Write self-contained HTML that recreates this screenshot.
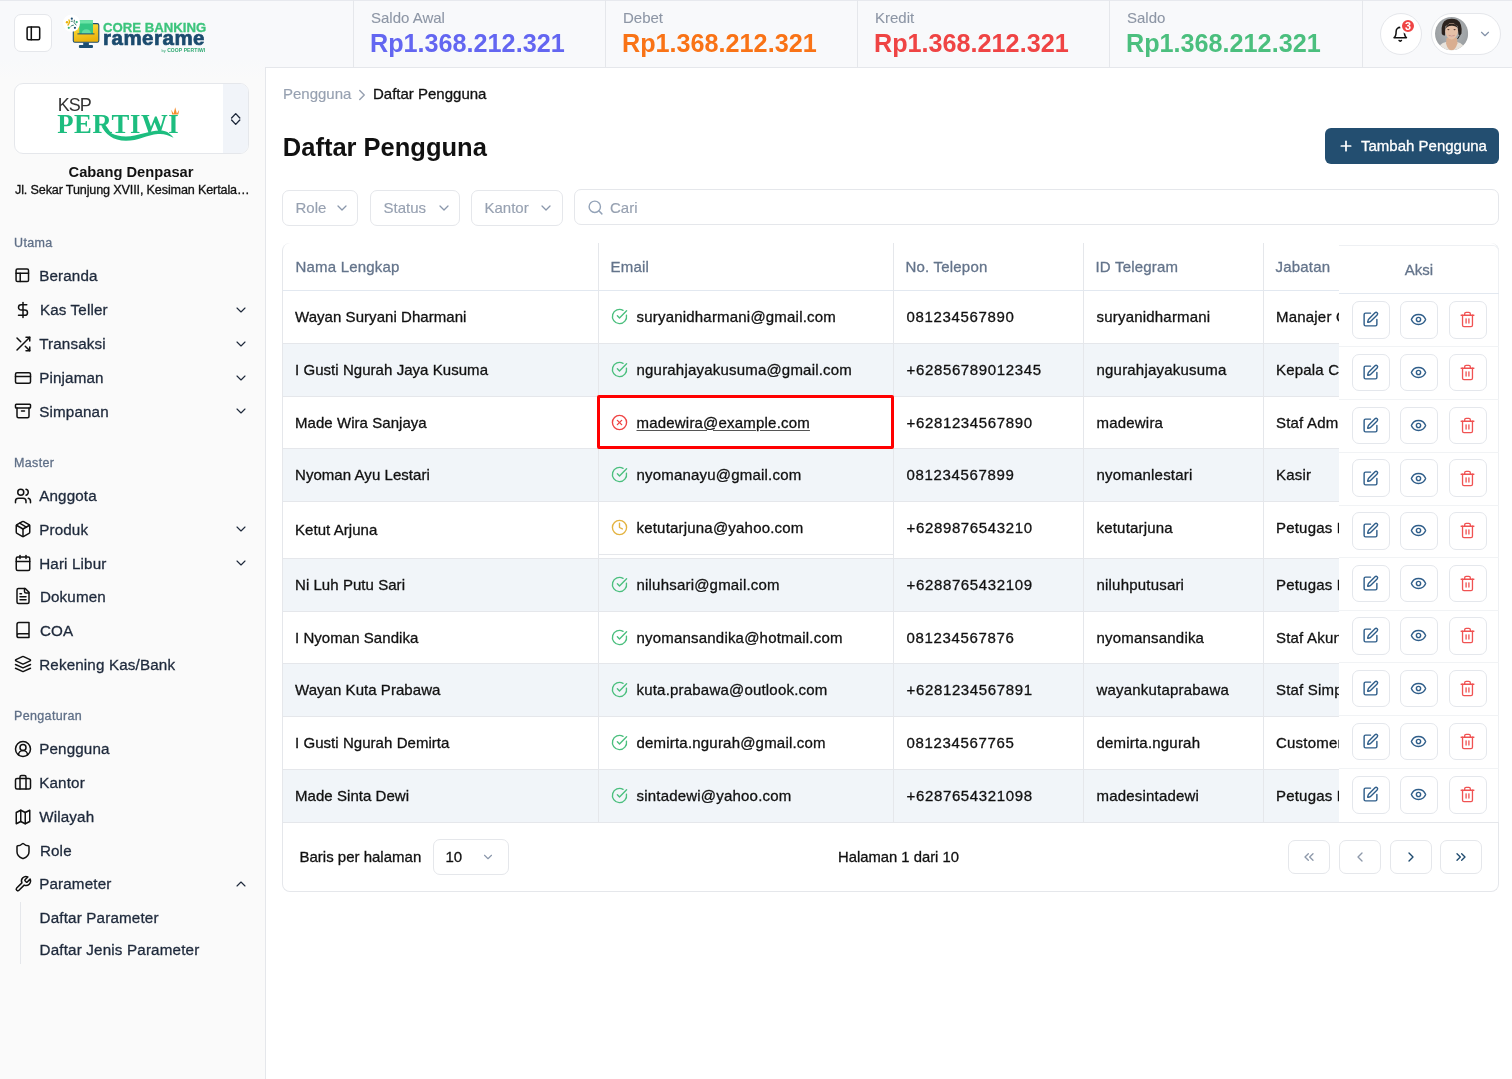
<!DOCTYPE html>
<html><head><meta charset="utf-8"><title>Daftar Pengguna</title>
<style>
html,body{margin:0;padding:0}
body{will-change:transform;width:1512px;height:1079px;position:relative;overflow:hidden;background:#fafafa;font-family:"Liberation Sans", sans-serif;-webkit-font-smoothing:antialiased}
.t{position:absolute;white-space:nowrap}
.b{position:absolute}
.ic{position:absolute;overflow:visible}
</style></head><body>
<div class="b" style="left:0px;top:0px;width:1512px;height:67px;background:#f8f9fb"></div>
<div class="b" style="left:0px;top:60px;width:265px;height:20px;background:linear-gradient(#f8f9fb,#fafafa)"></div>
<div class="b" style="left:0px;top:0px;width:1512px;height:1px;background:#e7e9ee"></div>
<div class="b" style="left:14px;top:14px;width:38px;height:38px;background:#fff;border:1px solid #e5e7eb;border-radius:7px;box-sizing:border-box"></div>
<svg class="ic" style="left:25px;top:24.7px;width:16.8px;height:16.8px" viewBox="0 0 24 24" fill="none" stroke="#111" stroke-width="2.2" stroke-linecap="round" stroke-linejoin="round"><rect width="18" height="18" x="3" y="3" rx="2"/><path d="M9 3v18"/></svg>
<svg class="ic" style="left:0;top:0;width:220px;height:60px" viewBox="0 0 220 60">
<defs><linearGradient id="yl" x1="0" y1="0" x2="0.3" y2="1"><stop offset="0" stop-color="#fde542"/><stop offset="1" stop-color="#ebb20c"/></linearGradient></defs>
<rect x="73.3" y="23.6" width="25.5" height="18.7" rx="1.6" fill="url(#yl)" stroke="#1d4e72" stroke-width="1.1"/>
<rect x="79.3" y="20.2" width="13.7" height="13.7" fill="#34c784"/>
<rect x="79.3" y="20.2" width="13.7" height="3.3" fill="#6be3a6"/>
<path d="M81.6 33.9 A4.7 4.7 0 0 1 91 33.9 Z" fill="#62dca2"/>
<path d="M77.8 33.9 H94.1" stroke="#1d4e72" stroke-width="1" stroke-linecap="round"/>
<rect x="83.2" y="42.5" width="5.7" height="3" fill="#1d4e72"/>
<rect x="78.9" y="45" width="14.1" height="3" rx="1" fill="#1d4e72"/>
<circle cx="71.5" cy="23.1" r="8.6" fill="#fff"/>
<circle cx="71.8" cy="18.7" r="1.1" fill="#1d4e72"/>
<circle cx="76.7" cy="22.1" r="1.1" fill="#34b27a"/>
<circle cx="67" cy="22.3" r="1.2" fill="#eab308"/>
<circle cx="74.9" cy="27.8" r="1.1" fill="#1d4e72"/>
<circle cx="68.8" cy="27.8" r="1.1" fill="#34b27a"/>
<path d="M68.7 19.5 Q70.6 22.5 67.6 25.5" stroke="#eab308" stroke-width="1.3" fill="none"/>
<path d="M70.7 21.3 L72.8 21.2 M74.4 19.8 Q72.8 22.6 76.3 25.3 M70.5 26.8 Q71.6 25 73.8 25.2" stroke="#1f6e5c" stroke-width="0.9" fill="none"/>
</svg>
<div class="t" style="left:103px;top:21.00px;font-size:13.2px;line-height:14px;color:#3cc47c;font-weight:bold;letter-spacing:0px;-webkit-text-stroke:0.3px currentColor">CORE BANKING</div>
<div class="t" style="left:103px;top:26.00px;font-size:20.5px;line-height:24px;color:#1b4b6e;font-weight:bold;letter-spacing:0.5px;-webkit-text-stroke:0.7px currentColor">ramerame</div>
<div class="t" style="left:161.5px;top:47.30px;font-size:5px;line-height:6px;color:#2fa872;font-weight:bold;letter-spacing:0.1px"><span style="font-weight:normal;font-size:4px">by </span>COOP PERTIWI</div>
<div class="b" style="left:353px;top:0px;width:1px;height:67px;background:#e5e7eb"></div>
<div class="t" style="left:371px;top:7.50px;font-size:15px;line-height:20px;color:#8d96a5;font-weight:normal;-webkit-text-stroke:0.1px currentColor">Saldo Awal</div>
<div class="t" style="left:370px;top:28.00px;font-size:25.2px;line-height:30px;color:#6366f1;font-weight:bold;">Rp1.368.212.321</div>
<div class="b" style="left:605px;top:0px;width:1px;height:67px;background:#e5e7eb"></div>
<div class="t" style="left:623px;top:7.50px;font-size:15px;line-height:20px;color:#8d96a5;font-weight:normal;-webkit-text-stroke:0.1px currentColor">Debet</div>
<div class="t" style="left:622px;top:28.00px;font-size:25.2px;line-height:30px;color:#f97316;font-weight:bold;">Rp1.368.212.321</div>
<div class="b" style="left:857px;top:0px;width:1px;height:67px;background:#e5e7eb"></div>
<div class="t" style="left:875px;top:7.50px;font-size:15px;line-height:20px;color:#8d96a5;font-weight:normal;-webkit-text-stroke:0.1px currentColor">Kredit</div>
<div class="t" style="left:874px;top:28.00px;font-size:25.2px;line-height:30px;color:#ef4444;font-weight:bold;">Rp1.368.212.321</div>
<div class="b" style="left:1109px;top:0px;width:1px;height:67px;background:#e5e7eb"></div>
<div class="t" style="left:1127px;top:7.50px;font-size:15px;line-height:20px;color:#8d96a5;font-weight:normal;-webkit-text-stroke:0.1px currentColor">Saldo</div>
<div class="t" style="left:1126px;top:28.00px;font-size:25.2px;line-height:30px;color:#4bbf7e;font-weight:bold;">Rp1.368.212.321</div>
<div class="b" style="left:1362px;top:0px;width:1px;height:67px;background:#e5e7eb"></div>
<div class="b" style="left:1380px;top:13px;width:42px;height:42px;background:#fff;border:1px solid #e5e7eb;border-radius:50%;box-sizing:border-box"></div>
<svg class="ic" style="left:1392px;top:25.7px;width:16.5px;height:16.5px" viewBox="0 0 24 24" fill="none" stroke="#111" stroke-width="2.25" stroke-linecap="round" stroke-linejoin="round"><path d="M6 8a6 6 0 0 1 12 0c0 7 3 9 3 9H3s3-2 3-9"/><path d="M10.3 21a1.94 1.94 0 0 0 3.4 0"/></svg>
<div class="b" style="left:1399.8px;top:17.6px;width:16.4px;height:16.4px;background:#ef4444;border-radius:50%;border:2px solid #fff;box-sizing:border-box"></div>
<div class="t" style="left:1405px;top:19.60px;font-size:10.8px;line-height:12px;color:#fff;font-weight:bold;">3</div>
<div class="b" style="left:1431px;top:13px;width:70px;height:42px;background:#fff;border:1px solid #e5e7eb;border-radius:21px;box-sizing:border-box"></div>
<svg class="ic" style="left:1434.6px;top:17.1px;width:33.2px;height:33.2px" viewBox="0 0 33.2 33.2">
<defs><clipPath id="avc"><circle cx="16.6" cy="16.6" r="16.6"/></clipPath>
<radialGradient id="avbg" cx="0.5" cy="0.45" r="0.6"><stop offset="0" stop-color="#b2b6b8"/><stop offset="1" stop-color="#989c9f"/></radialGradient></defs>
<g clip-path="url(#avc)"><rect width="33.2" height="33.2" fill="url(#avbg)"/>
<path d="M2 34 Q4 26.5 11 25 L22 25 Q29 26.5 31 34Z" fill="#e7e3dc"/>
<path d="M11.5 21 L22 21 L22.5 26.5 Q20 33.5 16.6 33.5 Q13 33.5 11 26.5Z" fill="#d9ae90"/>
<path d="M6.7 16.5 Q5.5 5 12 2.6 Q17 0.6 22 2.8 Q27.5 6 26.5 16.5 Q25 19 23.5 17.5 L22.5 9 Q17 6 10.5 9 L10 18.5 Q7.5 19 6.7 16.5Z" fill="#2b221d"/>
<ellipse cx="16.6" cy="14.3" rx="6.3" ry="8.2" fill="#e5c0a7"/>
<path d="M10.3 12 Q12 6.5 17 6.6 Q21.5 6.8 23 11.5 Q21 8.6 16.6 8.8 Q12 9 10.3 12Z" fill="#2b221d"/>
<ellipse cx="13.4" cy="12.6" rx="1.1" ry="0.6" fill="#5a4036"/><ellipse cx="19.6" cy="12.6" rx="1.1" ry="0.6" fill="#5a4036"/>
<path d="M13.8 18.4 Q16.6 20.6 19.6 18.4 Q16.6 19.3 13.8 18.4Z" fill="#fff" stroke="#b5706a" stroke-width="0.4"/>
<path d="M25.4 14 Q25.5 19 22.5 22" stroke="#222" stroke-width="1" fill="none"/>
</g></svg>
<svg class="ic" style="left:1478px;top:26.5px;width:14px;height:14px" viewBox="0 0 24 24" fill="none" stroke="#8391a7" stroke-width="2" stroke-linecap="round" stroke-linejoin="round"><path d="m6 9 6 6 6-6"/></svg>
<div class="b" style="left:265px;top:67px;width:1247px;height:1012px;background:#fff;border-left:1px solid #e5e7eb;border-top:1px solid #e5e7eb;box-sizing:border-box"></div>
<div class="b" style="left:14px;top:83px;width:235px;height:71px;background:#fff;border:1px solid #e5e7eb;border-radius:9px;box-sizing:border-box;overflow:hidden"></div>
<div class="b" style="left:223px;top:84px;width:25px;height:69px;background:#f1f4f9;border-radius:0 8px 8px 0"></div>
<svg class="ic" style="left:228px;top:111px;width:16px;height:16px" viewBox="0 0 16 16" fill="none" stroke="#1e293b" stroke-width="1.35" stroke-linecap="round" stroke-linejoin="round"><path d="M3.6 7 L7.7 2.6 L11.8 7"/><path d="M3.6 9 L7.7 13.4 L11.8 9"/></svg>
<div class="t" style="left:57.8px;top:94.80px;font-size:18px;line-height:20px;color:#333;font-weight:normal;-webkit-text-stroke:0px;letter-spacing:-1px">KSP</div>
<div class="t" style="left:57.2px;top:110.30px;font-size:26.7px;line-height:28px;color:#1dbd7f;font-weight:bold;font-family:'Liberation Serif',serif;letter-spacing:0.62px">PERTIWI</div>
<svg class="ic" style="left:0;top:0;width:265px;height:200px" viewBox="0 0 265 200"><path d="M101 125 C106 131 114 136.5 126 136.5 C138 136.5 148 130.5 160 130.5 C166 130.5 170 133 173.5 137.8 C168 134.5 163 133.5 158 134 C147 135 138 140.8 126 140.8 C113 140.8 105 134 101 125 Z" fill="#1dbd7f"/><path d="M171.3 109.8 L173.6 113.8 L175.2 107.2 L176.9 113.8 L179.2 109.8 L178.3 114.6 L172.2 114.6 Z" fill="#f58b2a"/></svg>
<div class="t" style="left:131px;top:161.80px;font-size:14.7px;line-height:20px;color:#111;font-weight:bold;transform:translateX(-50%);white-space:nowrap">Cabang Denpasar</div>
<div class="t" style="left:15px;top:181.50px;font-size:12.6px;line-height:16px;color:#111;font-weight:normal;-webkit-text-stroke:0.3px currentColor;white-space:nowrap;letter-spacing:-0.14px">Jl. Sekar Tunjung XVIII, Kesiman Kertala&#8230;</div>
<div class="t" style="left:14px;top:235.30px;font-size:12.5px;line-height:16px;color:#5f6f87;font-weight:normal;-webkit-text-stroke:0.3px currentColor;letter-spacing:0.35px">Utama</div>
<svg class="ic" style="left:14.2px;top:267.4px;width:16.6px;height:16.6px" viewBox="0 0 24 24" fill="none" stroke="#111" stroke-width="2.15" stroke-linecap="round" stroke-linejoin="round"><rect width="18" height="18" x="3" y="3" rx="2"/><path d="M3 9h18"/><path d="M9 21V9"/></svg>
<div class="t" style="left:39.2px;top:266.20px;font-size:15.2px;line-height:20px;color:#1e293b;font-weight:normal;-webkit-text-stroke:0.3px currentColor;white-space:nowrap;letter-spacing:0.15px">Beranda</div>
<svg class="ic" style="left:13.6px;top:300.7px;width:18px;height:18px" viewBox="0 0 24 24" fill="none" stroke="#111" stroke-width="2" stroke-linecap="round" stroke-linejoin="round"><line x1="12" x2="12" y1="2" y2="22"/><path d="M17 5H9.5a3.5 3.5 0 0 0 0 7h5a3.5 3.5 0 0 1 0 7H6"/></svg>
<div class="t" style="left:39.900000000000006px;top:300.20px;font-size:15.2px;line-height:20px;color:#1e293b;font-weight:normal;-webkit-text-stroke:0.3px currentColor;white-space:nowrap;letter-spacing:0.15px">Kas Teller</div>
<svg class="ic" style="left:232.5px;top:301.7px;width:16px;height:16px" viewBox="0 0 24 24" fill="none" stroke="#1e293b" stroke-width="1.7" stroke-linecap="round" stroke-linejoin="round"><path d="m6 9 6 6 6-6"/></svg>
<svg class="ic" style="left:13.6px;top:334.6px;width:18px;height:18px" viewBox="0 0 24 24" fill="none" stroke="#111" stroke-width="2" stroke-linecap="round" stroke-linejoin="round"><polyline points="16 3 21 3 21 8"/><line x1="4" x2="21" y1="20" y2="3"/><polyline points="21 16 21 21 16 21"/><line x1="15" x2="21" y1="15" y2="21"/><line x1="4" x2="9" y1="4" y2="9"/></svg>
<div class="t" style="left:39.2px;top:334.10px;font-size:15.2px;line-height:20px;color:#1e293b;font-weight:normal;-webkit-text-stroke:0.3px currentColor;white-space:nowrap;letter-spacing:0.15px">Transaksi</div>
<svg class="ic" style="left:232.5px;top:335.6px;width:16px;height:16px" viewBox="0 0 24 24" fill="none" stroke="#1e293b" stroke-width="1.7" stroke-linecap="round" stroke-linejoin="round"><path d="m6 9 6 6 6-6"/></svg>
<svg class="ic" style="left:13.6px;top:368.5px;width:18px;height:18px" viewBox="0 0 24 24" fill="none" stroke="#111" stroke-width="2" stroke-linecap="round" stroke-linejoin="round"><rect width="20" height="14" x="2" y="5" rx="2"/><line x1="2" x2="22" y1="10" y2="10"/></svg>
<div class="t" style="left:39.2px;top:368.00px;font-size:15.2px;line-height:20px;color:#1e293b;font-weight:normal;-webkit-text-stroke:0.3px currentColor;white-space:nowrap;letter-spacing:0.15px">Pinjaman</div>
<svg class="ic" style="left:232.5px;top:369.5px;width:16px;height:16px" viewBox="0 0 24 24" fill="none" stroke="#1e293b" stroke-width="1.7" stroke-linecap="round" stroke-linejoin="round"><path d="m6 9 6 6 6-6"/></svg>
<svg class="ic" style="left:13.6px;top:402.3px;width:18px;height:18px" viewBox="0 0 24 24" fill="none" stroke="#111" stroke-width="2" stroke-linecap="round" stroke-linejoin="round"><rect width="20" height="5" x="2" y="3" rx="1"/><path d="M4 8v11a2 2 0 0 0 2 2h12a2 2 0 0 0 2-2V8"/><path d="M10 12h4"/></svg>
<div class="t" style="left:39.2px;top:401.80px;font-size:15.2px;line-height:20px;color:#1e293b;font-weight:normal;-webkit-text-stroke:0.3px currentColor;white-space:nowrap;letter-spacing:0.15px">Simpanan</div>
<svg class="ic" style="left:232.5px;top:403.3px;width:16px;height:16px" viewBox="0 0 24 24" fill="none" stroke="#1e293b" stroke-width="1.7" stroke-linecap="round" stroke-linejoin="round"><path d="m6 9 6 6 6-6"/></svg>
<div class="t" style="left:14px;top:455.00px;font-size:12.5px;line-height:16px;color:#5f6f87;font-weight:normal;-webkit-text-stroke:0.3px currentColor;letter-spacing:0.35px">Master</div>
<svg class="ic" style="left:13.6px;top:486.5px;width:18px;height:18px" viewBox="0 0 24 24" fill="none" stroke="#111" stroke-width="2" stroke-linecap="round" stroke-linejoin="round"><path d="M16 21v-2a4 4 0 0 0-4-4H6a4 4 0 0 0-4 4v2"/><circle cx="9" cy="7" r="4"/><path d="M22 21v-2a4 4 0 0 0-3-3.87"/><path d="M16 3.13a4 4 0 0 1 0 7.75"/></svg>
<div class="t" style="left:39.2px;top:486.00px;font-size:15.2px;line-height:20px;color:#1e293b;font-weight:normal;-webkit-text-stroke:0.3px currentColor;white-space:nowrap;letter-spacing:0.15px">Anggota</div>
<svg class="ic" style="left:13.6px;top:520.4px;width:18px;height:18px" viewBox="0 0 24 24" fill="none" stroke="#111" stroke-width="2" stroke-linecap="round" stroke-linejoin="round"><path d="m7.5 4.27 9 5.15"/><path d="M21 8a2 2 0 0 0-1-1.73l-7-4a2 2 0 0 0-2 0l-7 4A2 2 0 0 0 3 8v8a2 2 0 0 0 1 1.73l7 4a2 2 0 0 0 2 0l7-4A2 2 0 0 0 21 16Z"/><path d="m3.3 7 8.7 5 8.7-5"/><path d="M12 22V12"/></svg>
<div class="t" style="left:39.2px;top:519.90px;font-size:15.2px;line-height:20px;color:#1e293b;font-weight:normal;-webkit-text-stroke:0.3px currentColor;white-space:nowrap;letter-spacing:0.15px">Produk</div>
<svg class="ic" style="left:232.5px;top:521.4px;width:16px;height:16px" viewBox="0 0 24 24" fill="none" stroke="#1e293b" stroke-width="1.7" stroke-linecap="round" stroke-linejoin="round"><path d="m6 9 6 6 6-6"/></svg>
<svg class="ic" style="left:13.6px;top:554.3px;width:18px;height:18px" viewBox="0 0 24 24" fill="none" stroke="#111" stroke-width="2" stroke-linecap="round" stroke-linejoin="round"><path d="M8 2v4"/><path d="M16 2v4"/><rect width="18" height="18" x="3" y="4" rx="2"/><path d="M3 10h18"/></svg>
<div class="t" style="left:39.2px;top:553.80px;font-size:15.2px;line-height:20px;color:#1e293b;font-weight:normal;-webkit-text-stroke:0.3px currentColor;white-space:nowrap;letter-spacing:0.15px">Hari Libur</div>
<svg class="ic" style="left:232.5px;top:555.3px;width:16px;height:16px" viewBox="0 0 24 24" fill="none" stroke="#1e293b" stroke-width="1.7" stroke-linecap="round" stroke-linejoin="round"><path d="m6 9 6 6 6-6"/></svg>
<svg class="ic" style="left:13.6px;top:587.2px;width:18px;height:18px" viewBox="0 0 24 24" fill="none" stroke="#111" stroke-width="2" stroke-linecap="round" stroke-linejoin="round"><path d="M15 2H6a2 2 0 0 0-2 2v16a2 2 0 0 0 2 2h12a2 2 0 0 0 2-2V7Z"/><path d="M14 2v4a2 2 0 0 0 2 2h4"/><path d="M10 9H8"/><path d="M16 13H8"/><path d="M16 17H8"/></svg>
<div class="t" style="left:39.900000000000006px;top:586.70px;font-size:15.2px;line-height:20px;color:#1e293b;font-weight:normal;-webkit-text-stroke:0.3px currentColor;white-space:nowrap;letter-spacing:0.15px">Dokumen</div>
<svg class="ic" style="left:13.6px;top:621.2px;width:18px;height:18px" viewBox="0 0 24 24" fill="none" stroke="#111" stroke-width="2" stroke-linecap="round" stroke-linejoin="round"><path d="M4 19.5v-15A2.5 2.5 0 0 1 6.5 2H20v20H6.5a2.5 2.5 0 0 1 0-5H20"/></svg>
<div class="t" style="left:39.900000000000006px;top:620.70px;font-size:15.2px;line-height:20px;color:#1e293b;font-weight:normal;-webkit-text-stroke:0.3px currentColor;white-space:nowrap;letter-spacing:0.15px">COA</div>
<svg class="ic" style="left:13.6px;top:655.3px;width:18px;height:18px" viewBox="0 0 24 24" fill="none" stroke="#111" stroke-width="2" stroke-linecap="round" stroke-linejoin="round"><path d="M12.83 2.18a2 2 0 0 0-1.66 0L2.6 6.08a1 1 0 0 0 0 1.83l8.58 3.91a2 2 0 0 0 1.66 0l8.58-3.9a1 1 0 0 0 0-1.83Z"/><path d="m22 17.65-9.17 4.16a2 2 0 0 1-1.66 0L2 17.65"/><path d="m22 12.65-9.17 4.16a2 2 0 0 1-1.66 0L2 12.65"/></svg>
<div class="t" style="left:39.2px;top:654.80px;font-size:15.2px;line-height:20px;color:#1e293b;font-weight:normal;-webkit-text-stroke:0.3px currentColor;white-space:nowrap;letter-spacing:0.15px">Rekening Kas/Bank</div>
<div class="t" style="left:14px;top:708.30px;font-size:12.5px;line-height:16px;color:#5f6f87;font-weight:normal;-webkit-text-stroke:0.3px currentColor;letter-spacing:0.35px">Pengaturan</div>
<svg class="ic" style="left:13.6px;top:739.8px;width:18px;height:18px" viewBox="0 0 24 24" fill="none" stroke="#111" stroke-width="2" stroke-linecap="round" stroke-linejoin="round"><path d="M18 20a6 6 0 0 0-12 0"/><circle cx="12" cy="10" r="4"/><circle cx="12" cy="12" r="10"/></svg>
<div class="t" style="left:39.2px;top:739.30px;font-size:15.2px;line-height:20px;color:#1e293b;font-weight:normal;-webkit-text-stroke:0.3px currentColor;white-space:nowrap;letter-spacing:0.15px">Pengguna</div>
<svg class="ic" style="left:13.6px;top:773.7px;width:18px;height:18px" viewBox="0 0 24 24" fill="none" stroke="#111" stroke-width="2" stroke-linecap="round" stroke-linejoin="round"><path d="M16 20V4a2 2 0 0 0-2-2h-4a2 2 0 0 0-2 2v16"/><rect width="20" height="14" x="2" y="6" rx="2"/></svg>
<div class="t" style="left:39.2px;top:773.20px;font-size:15.2px;line-height:20px;color:#1e293b;font-weight:normal;-webkit-text-stroke:0.3px currentColor;white-space:nowrap;letter-spacing:0.15px">Kantor</div>
<svg class="ic" style="left:13.6px;top:807.6px;width:18px;height:18px" viewBox="0 0 24 24" fill="none" stroke="#111" stroke-width="2" stroke-linecap="round" stroke-linejoin="round"><polygon points="3 6 9 3 15 6 21 3 21 18 15 21 9 18 3 21"/><line x1="9" x2="9" y1="3" y2="18"/><line x1="15" x2="15" y1="6" y2="21"/></svg>
<div class="t" style="left:39.2px;top:807.10px;font-size:15.2px;line-height:20px;color:#1e293b;font-weight:normal;-webkit-text-stroke:0.3px currentColor;white-space:nowrap;letter-spacing:0.15px">Wilayah</div>
<svg class="ic" style="left:13.6px;top:841.5px;width:18px;height:18px" viewBox="0 0 24 24" fill="none" stroke="#111" stroke-width="2" stroke-linecap="round" stroke-linejoin="round"><path d="M20 13c0 5-3.5 7.5-7.66 8.95a1 1 0 0 1-.67-.01C7.5 20.5 4 18 4 13V6a1 1 0 0 1 1-1c2 0 4.5-1.2 6.24-2.72a1.17 1.17 0 0 1 1.52 0C14.51 3.81 17 5 19 5a1 1 0 0 1 1 1z"/></svg>
<div class="t" style="left:39.900000000000006px;top:841.00px;font-size:15.2px;line-height:20px;color:#1e293b;font-weight:normal;-webkit-text-stroke:0.3px currentColor;white-space:nowrap;letter-spacing:0.15px">Role</div>
<svg class="ic" style="left:13.6px;top:874.6px;width:18px;height:18px" viewBox="0 0 24 24" fill="none" stroke="#111" stroke-width="2" stroke-linecap="round" stroke-linejoin="round"><path d="M14.7 6.3a1 1 0 0 0 0 1.4l1.6 1.6a1 1 0 0 0 1.4 0l3.77-3.77a6 6 0 0 1-7.94 7.94l-6.91 6.91a2.12 2.12 0 0 1-3-3l6.91-6.91a6 6 0 0 1 7.94-7.94l-3.76 3.76z"/></svg>
<div class="t" style="left:39.2px;top:874.10px;font-size:15.2px;line-height:20px;color:#1e293b;font-weight:normal;-webkit-text-stroke:0.3px currentColor;white-space:nowrap;letter-spacing:0.15px">Parameter</div>
<svg class="ic" style="left:232.5px;top:875.6px;width:16px;height:16px" viewBox="0 0 24 24" fill="none" stroke="#1e293b" stroke-width="1.7" stroke-linecap="round" stroke-linejoin="round"><path d="m18 15-6-6-6 6"/></svg>
<div class="b" style="left:20px;top:902px;width:1px;height:62px;background:#e5e7eb"></div>
<div class="t" style="left:39.5px;top:907.50px;font-size:15.2px;line-height:20px;color:#1e293b;font-weight:normal;-webkit-text-stroke:0.3px currentColor;white-space:nowrap;letter-spacing:0.17px">Daftar Parameter</div>
<div class="t" style="left:39.5px;top:939.80px;font-size:15.2px;line-height:20px;color:#1e293b;font-weight:normal;-webkit-text-stroke:0.3px currentColor;white-space:nowrap;letter-spacing:0.17px">Daftar Jenis Parameter</div>
<div class="t" style="left:283px;top:83.80px;font-size:15px;line-height:20px;color:#97a1b1;font-weight:normal;-webkit-text-stroke:0.15px currentColor">Pengguna</div>
<svg class="ic" style="left:352.9px;top:85.5px;width:18px;height:18px" viewBox="0 0 24 24" fill="none" stroke="#97a1b1" stroke-width="1.9" stroke-linecap="round" stroke-linejoin="round"><path d="m9 18 6-6-6-6"/></svg>
<div class="t" style="left:373px;top:84.00px;font-size:15px;line-height:20px;color:#111;font-weight:normal;-webkit-text-stroke:0.3px currentColor;">Daftar Pengguna</div>
<div class="t" style="left:282.8px;top:132.20px;font-size:25.5px;line-height:30px;color:#111;font-weight:bold;letter-spacing:0px">Daftar Pengguna</div>
<div class="b" style="left:1325px;top:128px;width:174px;height:36px;background:#234e70;border-radius:6px"></div>
<svg class="ic" style="left:1338px;top:138px;width:16px;height:16px" viewBox="0 0 24 24" fill="none" stroke="#fff" stroke-width="2.6" stroke-linecap="round" stroke-linejoin="round"><path d="M5 12h14"/><path d="M12 5v14"/></svg>
<div class="t" style="left:1361px;top:136.30px;font-size:15px;line-height:20px;color:#fff;font-weight:normal;-webkit-text-stroke:0.3px currentColor;white-space:nowrap">Tambah Pengguna</div>
<div class="b" style="left:282px;top:190px;width:76px;height:36px;border:1px solid #e5e7eb;border-radius:7px;box-sizing:border-box;background:#fff"></div>
<div class="t" style="left:295.5px;top:198.00px;font-size:15px;line-height:20px;color:#97a1b1;font-weight:normal;-webkit-text-stroke:0.15px currentColor">Role</div>
<svg class="ic" style="left:334px;top:200px;width:16px;height:16px" viewBox="0 0 24 24" fill="none" stroke="#8a97ab" stroke-width="1.9" stroke-linecap="round" stroke-linejoin="round"><path d="m6 9 6 6 6-6"/></svg>
<div class="b" style="left:370px;top:190px;width:90px;height:36px;border:1px solid #e5e7eb;border-radius:7px;box-sizing:border-box;background:#fff"></div>
<div class="t" style="left:383.5px;top:198.00px;font-size:15px;line-height:20px;color:#97a1b1;font-weight:normal;-webkit-text-stroke:0.15px currentColor">Status</div>
<svg class="ic" style="left:436px;top:200px;width:16px;height:16px" viewBox="0 0 24 24" fill="none" stroke="#8a97ab" stroke-width="1.9" stroke-linecap="round" stroke-linejoin="round"><path d="m6 9 6 6 6-6"/></svg>
<div class="b" style="left:471px;top:190px;width:92px;height:36px;border:1px solid #e5e7eb;border-radius:7px;box-sizing:border-box;background:#fff"></div>
<div class="t" style="left:484.5px;top:198.00px;font-size:15px;line-height:20px;color:#97a1b1;font-weight:normal;-webkit-text-stroke:0.15px currentColor">Kantor</div>
<svg class="ic" style="left:537.8px;top:200px;width:16px;height:16px" viewBox="0 0 24 24" fill="none" stroke="#8a97ab" stroke-width="1.9" stroke-linecap="round" stroke-linejoin="round"><path d="m6 9 6 6 6-6"/></svg>
<div class="b" style="left:574px;top:189px;width:925px;height:36px;border:1px solid #e5e7eb;border-radius:7px;box-sizing:border-box;background:#fff"></div>
<svg class="ic" style="left:586.5px;top:198.5px;width:17px;height:17px" viewBox="0 0 24 24" fill="none" stroke="#94a3b8" stroke-width="2" stroke-linecap="round" stroke-linejoin="round"><circle cx="11" cy="11" r="8"/><path d="m21 21-4.3-4.3"/></svg>
<div class="t" style="left:610px;top:197.50px;font-size:15px;line-height:20px;color:#97a1b1;font-weight:normal;-webkit-text-stroke:0.15px currentColor">Cari</div>
<div class="b" style="left:282px;top:243px;width:1217px;height:649px;border:1px solid #e5e7eb;border-top:none;border-radius:8px;box-sizing:border-box;background:#fff"></div>
<div class="t" style="left:295.5px;top:256.50px;font-size:15px;line-height:20px;color:#64748b;font-weight:normal;-webkit-text-stroke:0.3px currentColor;white-space:nowrap;letter-spacing:0.2px">Nama Lengkap</div>
<div class="t" style="left:610.5px;top:256.50px;font-size:15px;line-height:20px;color:#64748b;font-weight:normal;-webkit-text-stroke:0.3px currentColor;white-space:nowrap;letter-spacing:0.2px">Email</div>
<div class="t" style="left:905.5px;top:256.50px;font-size:15px;line-height:20px;color:#64748b;font-weight:normal;-webkit-text-stroke:0.3px currentColor;white-space:nowrap;letter-spacing:0.2px">No. Telepon</div>
<div class="t" style="left:1095.5px;top:256.50px;font-size:15px;line-height:20px;color:#64748b;font-weight:normal;-webkit-text-stroke:0.3px currentColor;white-space:nowrap;letter-spacing:0.2px">ID Telegram</div>
<div class="t" style="left:1275.5px;top:256.50px;font-size:15px;line-height:20px;color:#64748b;font-weight:normal;-webkit-text-stroke:0.3px currentColor;white-space:nowrap;letter-spacing:0.2px">Jabatan</div>
<div class="b" style="left:283px;top:290px;width:1056px;height:1px;background:#e2e8f0"></div>
<div class="b" style="left:598px;top:243px;width:1px;height:579px;background:#e8ebf0"></div>
<div class="b" style="left:893px;top:243px;width:1px;height:579px;background:#e8ebf0"></div>
<div class="b" style="left:1083px;top:243px;width:1px;height:579px;background:#e8ebf0"></div>
<div class="b" style="left:1263px;top:243px;width:1px;height:579px;background:#e8ebf0"></div>
<div class="b" style="left:283px;top:343px;width:1056px;height:1px;background:#e5e7eb"></div>
<div class="t" style="left:295px;top:307.00px;font-size:15px;line-height:20px;color:#111;font-weight:normal;-webkit-text-stroke:0.3px currentColor;white-space:nowrap;letter-spacing:0.05px">Wayan Suryani Dharmani</div>
<svg class="ic" style="left:611px;top:308.4px;width:17px;height:17px" viewBox="0 0 24 24" fill="none" stroke="#4bbf7e" stroke-width="1.95" stroke-linecap="round" stroke-linejoin="round"><path d="M21.801 10A10 10 0 1 1 17 3.335"/><path d="m9 11 3 3L22 4"/></svg>
<div class="t" style="left:636.5px;top:307.00px;font-size:15px;line-height:20px;color:#111;font-weight:normal;-webkit-text-stroke:0.3px currentColor;white-space:nowrap;letter-spacing:0.2px">suryanidharmani@gmail.com</div>
<div class="t" style="left:906.5px;top:307.00px;font-size:15px;line-height:20px;color:#111;font-weight:normal;-webkit-text-stroke:0.3px currentColor;white-space:nowrap;letter-spacing:0.65px">081234567890</div>
<div class="t" style="left:1096.5px;top:307.00px;font-size:15px;line-height:20px;color:#111;font-weight:normal;-webkit-text-stroke:0.3px currentColor;white-space:nowrap;letter-spacing:0.2px">suryanidharmani</div>
<div class="t" style="left:1276px;top:307.00px;font-size:15px;line-height:20px;color:#111;font-weight:normal;-webkit-text-stroke:0.3px currentColor;white-space:nowrap;letter-spacing:0.2px">Manajer Operasional</div>
<div class="b" style="left:283px;top:344px;width:1056px;height:52px;background:#f1f5f9"></div>
<div class="b" style="left:283px;top:396px;width:1056px;height:1px;background:#e5e7eb"></div>
<div class="t" style="left:295px;top:360.00px;font-size:15px;line-height:20px;color:#111;font-weight:normal;-webkit-text-stroke:0.3px currentColor;white-space:nowrap;letter-spacing:0.05px">I Gusti Ngurah Jaya Kusuma</div>
<svg class="ic" style="left:611px;top:361.4px;width:17px;height:17px" viewBox="0 0 24 24" fill="none" stroke="#4bbf7e" stroke-width="1.95" stroke-linecap="round" stroke-linejoin="round"><path d="M21.801 10A10 10 0 1 1 17 3.335"/><path d="m9 11 3 3L22 4"/></svg>
<div class="t" style="left:636.5px;top:360.00px;font-size:15px;line-height:20px;color:#111;font-weight:normal;-webkit-text-stroke:0.3px currentColor;white-space:nowrap;letter-spacing:0.2px">ngurahjayakusuma@gmail.com</div>
<div class="t" style="left:906.5px;top:360.00px;font-size:15px;line-height:20px;color:#111;font-weight:normal;-webkit-text-stroke:0.3px currentColor;white-space:nowrap;letter-spacing:0.65px">+62856789012345</div>
<div class="t" style="left:1096.5px;top:360.00px;font-size:15px;line-height:20px;color:#111;font-weight:normal;-webkit-text-stroke:0.3px currentColor;white-space:nowrap;letter-spacing:0.2px">ngurahjayakusuma</div>
<div class="t" style="left:1276px;top:360.00px;font-size:15px;line-height:20px;color:#111;font-weight:normal;-webkit-text-stroke:0.3px currentColor;white-space:nowrap;letter-spacing:0.2px">Kepala Cabang</div>
<div class="b" style="left:283px;top:448px;width:1056px;height:1px;background:#e5e7eb"></div>
<div class="t" style="left:295px;top:412.50px;font-size:15px;line-height:20px;color:#111;font-weight:normal;-webkit-text-stroke:0.3px currentColor;white-space:nowrap;letter-spacing:0.05px">Made Wira Sanjaya</div>
<svg class="ic" style="left:611px;top:413.9px;width:17px;height:17px" viewBox="0 0 24 24" fill="none" stroke="#ef4444" stroke-width="1.95" stroke-linecap="round" stroke-linejoin="round"><circle cx="12" cy="12" r="10"/><path d="m15 9-6 6"/><path d="m9 9 6 6"/></svg>
<div class="t" style="left:636.5px;top:412.50px;font-size:15px;line-height:20px;color:#111;font-weight:normal;-webkit-text-stroke:0.3px currentColor;white-space:nowrap;letter-spacing:0.2px;text-decoration:underline;text-underline-offset:1.5px;text-decoration-color:#555">madewira@example.com</div>
<div class="t" style="left:906.5px;top:412.50px;font-size:15px;line-height:20px;color:#111;font-weight:normal;-webkit-text-stroke:0.3px currentColor;white-space:nowrap;letter-spacing:0.65px">+6281234567890</div>
<div class="t" style="left:1096.5px;top:412.50px;font-size:15px;line-height:20px;color:#111;font-weight:normal;-webkit-text-stroke:0.3px currentColor;white-space:nowrap;letter-spacing:0.2px">madewira</div>
<div class="t" style="left:1276px;top:412.50px;font-size:15px;line-height:20px;color:#111;font-weight:normal;-webkit-text-stroke:0.3px currentColor;white-space:nowrap;letter-spacing:0.2px">Staf Administrasi</div>
<div class="b" style="left:283px;top:449px;width:1056px;height:52px;background:#f1f5f9"></div>
<div class="b" style="left:283px;top:501px;width:1056px;height:1px;background:#e5e7eb"></div>
<div class="t" style="left:295px;top:465.00px;font-size:15px;line-height:20px;color:#111;font-weight:normal;-webkit-text-stroke:0.3px currentColor;white-space:nowrap;letter-spacing:0.05px">Nyoman Ayu Lestari</div>
<svg class="ic" style="left:611px;top:466.4px;width:17px;height:17px" viewBox="0 0 24 24" fill="none" stroke="#4bbf7e" stroke-width="1.95" stroke-linecap="round" stroke-linejoin="round"><path d="M21.801 10A10 10 0 1 1 17 3.335"/><path d="m9 11 3 3L22 4"/></svg>
<div class="t" style="left:636.5px;top:465.00px;font-size:15px;line-height:20px;color:#111;font-weight:normal;-webkit-text-stroke:0.3px currentColor;white-space:nowrap;letter-spacing:0.2px">nyomanayu@gmail.com</div>
<div class="t" style="left:906.5px;top:465.00px;font-size:15px;line-height:20px;color:#111;font-weight:normal;-webkit-text-stroke:0.3px currentColor;white-space:nowrap;letter-spacing:0.65px">081234567899</div>
<div class="t" style="left:1096.5px;top:465.00px;font-size:15px;line-height:20px;color:#111;font-weight:normal;-webkit-text-stroke:0.3px currentColor;white-space:nowrap;letter-spacing:0.2px">nyomanlestari</div>
<div class="t" style="left:1276px;top:465.00px;font-size:15px;line-height:20px;color:#111;font-weight:normal;-webkit-text-stroke:0.3px currentColor;white-space:nowrap;letter-spacing:0.2px">Kasir</div>
<div class="b" style="left:283px;top:558px;width:1056px;height:1px;background:#e5e7eb"></div>
<div class="t" style="left:295px;top:520.30px;font-size:15px;line-height:20px;color:#111;font-weight:normal;-webkit-text-stroke:0.3px currentColor;white-space:nowrap;letter-spacing:0.05px">Ketut Arjuna</div>
<svg class="ic" style="left:611px;top:519.1px;width:17px;height:17px" viewBox="0 0 24 24" fill="none" stroke="#e3b341" stroke-width="1.95" stroke-linecap="round" stroke-linejoin="round"><circle cx="12" cy="12" r="10"/><polyline points="12 6 12 12 16 14"/></svg>
<div class="t" style="left:636.5px;top:517.70px;font-size:15px;line-height:20px;color:#111;font-weight:normal;-webkit-text-stroke:0.3px currentColor;white-space:nowrap;letter-spacing:0.2px">ketutarjuna@yahoo.com</div>
<div class="t" style="left:906.5px;top:517.70px;font-size:15px;line-height:20px;color:#111;font-weight:normal;-webkit-text-stroke:0.3px currentColor;white-space:nowrap;letter-spacing:0.65px">+6289876543210</div>
<div class="t" style="left:1096.5px;top:517.70px;font-size:15px;line-height:20px;color:#111;font-weight:normal;-webkit-text-stroke:0.3px currentColor;white-space:nowrap;letter-spacing:0.2px">ketutarjuna</div>
<div class="t" style="left:1276px;top:517.70px;font-size:15px;line-height:20px;color:#111;font-weight:normal;-webkit-text-stroke:0.3px currentColor;white-space:nowrap;letter-spacing:0.2px">Petugas Lapangan</div>
<div class="b" style="left:283px;top:559px;width:1056px;height:52px;background:#f1f5f9"></div>
<div class="b" style="left:283px;top:611px;width:1056px;height:1px;background:#e5e7eb"></div>
<div class="t" style="left:295px;top:575.00px;font-size:15px;line-height:20px;color:#111;font-weight:normal;-webkit-text-stroke:0.3px currentColor;white-space:nowrap;letter-spacing:0.05px">Ni Luh Putu Sari</div>
<svg class="ic" style="left:611px;top:576.4px;width:17px;height:17px" viewBox="0 0 24 24" fill="none" stroke="#4bbf7e" stroke-width="1.95" stroke-linecap="round" stroke-linejoin="round"><path d="M21.801 10A10 10 0 1 1 17 3.335"/><path d="m9 11 3 3L22 4"/></svg>
<div class="t" style="left:636.5px;top:575.00px;font-size:15px;line-height:20px;color:#111;font-weight:normal;-webkit-text-stroke:0.3px currentColor;white-space:nowrap;letter-spacing:0.2px">niluhsari@gmail.com</div>
<div class="t" style="left:906.5px;top:575.00px;font-size:15px;line-height:20px;color:#111;font-weight:normal;-webkit-text-stroke:0.3px currentColor;white-space:nowrap;letter-spacing:0.65px">+6288765432109</div>
<div class="t" style="left:1096.5px;top:575.00px;font-size:15px;line-height:20px;color:#111;font-weight:normal;-webkit-text-stroke:0.3px currentColor;white-space:nowrap;letter-spacing:0.2px">niluhputusari</div>
<div class="t" style="left:1276px;top:575.00px;font-size:15px;line-height:20px;color:#111;font-weight:normal;-webkit-text-stroke:0.3px currentColor;white-space:nowrap;letter-spacing:0.2px">Petugas Lapangan</div>
<div class="b" style="left:283px;top:663px;width:1056px;height:1px;background:#e5e7eb"></div>
<div class="t" style="left:295px;top:627.50px;font-size:15px;line-height:20px;color:#111;font-weight:normal;-webkit-text-stroke:0.3px currentColor;white-space:nowrap;letter-spacing:0.05px">I Nyoman Sandika</div>
<svg class="ic" style="left:611px;top:628.9px;width:17px;height:17px" viewBox="0 0 24 24" fill="none" stroke="#4bbf7e" stroke-width="1.95" stroke-linecap="round" stroke-linejoin="round"><path d="M21.801 10A10 10 0 1 1 17 3.335"/><path d="m9 11 3 3L22 4"/></svg>
<div class="t" style="left:636.5px;top:627.50px;font-size:15px;line-height:20px;color:#111;font-weight:normal;-webkit-text-stroke:0.3px currentColor;white-space:nowrap;letter-spacing:0.2px">nyomansandika@hotmail.com</div>
<div class="t" style="left:906.5px;top:627.50px;font-size:15px;line-height:20px;color:#111;font-weight:normal;-webkit-text-stroke:0.3px currentColor;white-space:nowrap;letter-spacing:0.65px">081234567876</div>
<div class="t" style="left:1096.5px;top:627.50px;font-size:15px;line-height:20px;color:#111;font-weight:normal;-webkit-text-stroke:0.3px currentColor;white-space:nowrap;letter-spacing:0.2px">nyomansandika</div>
<div class="t" style="left:1276px;top:627.50px;font-size:15px;line-height:20px;color:#111;font-weight:normal;-webkit-text-stroke:0.3px currentColor;white-space:nowrap;letter-spacing:0.2px">Staf Akuntansi</div>
<div class="b" style="left:283px;top:664px;width:1056px;height:52px;background:#f1f5f9"></div>
<div class="b" style="left:283px;top:716px;width:1056px;height:1px;background:#e5e7eb"></div>
<div class="t" style="left:295px;top:680.00px;font-size:15px;line-height:20px;color:#111;font-weight:normal;-webkit-text-stroke:0.3px currentColor;white-space:nowrap;letter-spacing:0.05px">Wayan Kuta Prabawa</div>
<svg class="ic" style="left:611px;top:681.4px;width:17px;height:17px" viewBox="0 0 24 24" fill="none" stroke="#4bbf7e" stroke-width="1.95" stroke-linecap="round" stroke-linejoin="round"><path d="M21.801 10A10 10 0 1 1 17 3.335"/><path d="m9 11 3 3L22 4"/></svg>
<div class="t" style="left:636.5px;top:680.00px;font-size:15px;line-height:20px;color:#111;font-weight:normal;-webkit-text-stroke:0.3px currentColor;white-space:nowrap;letter-spacing:0.2px">kuta.prabawa@outlook.com</div>
<div class="t" style="left:906.5px;top:680.00px;font-size:15px;line-height:20px;color:#111;font-weight:normal;-webkit-text-stroke:0.3px currentColor;white-space:nowrap;letter-spacing:0.65px">+6281234567891</div>
<div class="t" style="left:1096.5px;top:680.00px;font-size:15px;line-height:20px;color:#111;font-weight:normal;-webkit-text-stroke:0.3px currentColor;white-space:nowrap;letter-spacing:0.2px">wayankutaprabawa</div>
<div class="t" style="left:1276px;top:680.00px;font-size:15px;line-height:20px;color:#111;font-weight:normal;-webkit-text-stroke:0.3px currentColor;white-space:nowrap;letter-spacing:0.2px">Staf Simpanan</div>
<div class="b" style="left:283px;top:769px;width:1056px;height:1px;background:#e5e7eb"></div>
<div class="t" style="left:295px;top:733.00px;font-size:15px;line-height:20px;color:#111;font-weight:normal;-webkit-text-stroke:0.3px currentColor;white-space:nowrap;letter-spacing:0.05px">I Gusti Ngurah Demirta</div>
<svg class="ic" style="left:611px;top:734.4px;width:17px;height:17px" viewBox="0 0 24 24" fill="none" stroke="#4bbf7e" stroke-width="1.95" stroke-linecap="round" stroke-linejoin="round"><path d="M21.801 10A10 10 0 1 1 17 3.335"/><path d="m9 11 3 3L22 4"/></svg>
<div class="t" style="left:636.5px;top:733.00px;font-size:15px;line-height:20px;color:#111;font-weight:normal;-webkit-text-stroke:0.3px currentColor;white-space:nowrap;letter-spacing:0.2px">demirta.ngurah@gmail.com</div>
<div class="t" style="left:906.5px;top:733.00px;font-size:15px;line-height:20px;color:#111;font-weight:normal;-webkit-text-stroke:0.3px currentColor;white-space:nowrap;letter-spacing:0.65px">081234567765</div>
<div class="t" style="left:1096.5px;top:733.00px;font-size:15px;line-height:20px;color:#111;font-weight:normal;-webkit-text-stroke:0.3px currentColor;white-space:nowrap;letter-spacing:0.2px">demirta.ngurah</div>
<div class="t" style="left:1276px;top:733.00px;font-size:15px;line-height:20px;color:#111;font-weight:normal;-webkit-text-stroke:0.3px currentColor;white-space:nowrap;letter-spacing:0.2px">Customer Service</div>
<div class="b" style="left:283px;top:770px;width:1056px;height:52px;background:#f1f5f9"></div>
<div class="b" style="left:283px;top:822px;width:1056px;height:1px;background:#e5e7eb"></div>
<div class="t" style="left:295px;top:786.00px;font-size:15px;line-height:20px;color:#111;font-weight:normal;-webkit-text-stroke:0.3px currentColor;white-space:nowrap;letter-spacing:0.05px">Made Sinta Dewi</div>
<svg class="ic" style="left:611px;top:787.4px;width:17px;height:17px" viewBox="0 0 24 24" fill="none" stroke="#4bbf7e" stroke-width="1.95" stroke-linecap="round" stroke-linejoin="round"><path d="M21.801 10A10 10 0 1 1 17 3.335"/><path d="m9 11 3 3L22 4"/></svg>
<div class="t" style="left:636.5px;top:786.00px;font-size:15px;line-height:20px;color:#111;font-weight:normal;-webkit-text-stroke:0.3px currentColor;white-space:nowrap;letter-spacing:0.2px">sintadewi@yahoo.com</div>
<div class="t" style="left:906.5px;top:786.00px;font-size:15px;line-height:20px;color:#111;font-weight:normal;-webkit-text-stroke:0.3px currentColor;white-space:nowrap;letter-spacing:0.65px">+6287654321098</div>
<div class="t" style="left:1096.5px;top:786.00px;font-size:15px;line-height:20px;color:#111;font-weight:normal;-webkit-text-stroke:0.3px currentColor;white-space:nowrap;letter-spacing:0.2px">madesintadewi</div>
<div class="t" style="left:1276px;top:786.00px;font-size:15px;line-height:20px;color:#111;font-weight:normal;-webkit-text-stroke:0.3px currentColor;white-space:nowrap;letter-spacing:0.2px">Petugas Lapangan</div>
<div class="b" style="left:598px;top:554px;width:295px;height:1px;background:#e5e7eb"></div>
<div class="b" style="left:598px;top:243px;width:1px;height:579px;background:#e5e7eb"></div>
<div class="b" style="left:893px;top:243px;width:1px;height:579px;background:#e5e7eb"></div>
<div class="b" style="left:1083px;top:243px;width:1px;height:579px;background:#e5e7eb"></div>
<div class="b" style="left:1263px;top:243px;width:1px;height:579px;background:#e5e7eb"></div>
<div class="b" style="left:597px;top:395px;width:297px;height:54px;border:3px solid #ff0000;border-radius:2px;box-sizing:border-box"></div>
<div class="b" style="left:1339px;top:245px;width:160px;height:578px;background:#fff;border-top:1px solid #eef0f3;border-right:1px solid #eef0f3;border-top-right-radius:6px;box-sizing:border-box"></div>
<div class="t" style="left:1419px;top:259.50px;font-size:15px;line-height:20px;color:#64748b;font-weight:normal;-webkit-text-stroke:0.3px currentColor;transform:translateX(-50%)">Aksi</div>
<div class="b" style="left:1339px;top:293px;width:160px;height:1px;background:#e2e8f0"></div>
<div class="b" style="left:1339px;top:346px;width:160px;height:1px;background:#f1f3f5"></div>
<div class="b" style="left:1352px;top:301.0px;width:37.6px;height:37.6px;border:1px solid #e4e7ec;border-radius:7px;box-sizing:border-box;background:#fff"></div>
<svg class="ic" style="left:1362.3px;top:311.2px;width:17px;height:17px" viewBox="0 0 24 24" fill="none" stroke="#2f5e8a" stroke-width="2" stroke-linecap="round" stroke-linejoin="round"><path d="M12 3H5a2 2 0 0 0-2 2v14a2 2 0 0 0 2 2h14a2 2 0 0 0 2-2v-7"/><path d="M18.375 2.625a1 1 0 0 1 3 3l-9.013 9.014a2 2 0 0 1-.853.505l-2.873.84a.5.5 0 0 1-.62-.62l.84-2.873a2 2 0 0 1 .506-.852z"/></svg>
<div class="b" style="left:1400px;top:301.0px;width:37.6px;height:37.6px;border:1px solid #e4e7ec;border-radius:7px;box-sizing:border-box;background:#fff"></div>
<svg class="ic" style="left:1410.3px;top:311.2px;width:17px;height:17px" viewBox="0 0 24 24" fill="none" stroke="#2f5e8a" stroke-width="2" stroke-linecap="round" stroke-linejoin="round"><path d="M2.062 12.348a1 1 0 0 1 0-.696 10.75 10.75 0 0 1 19.876 0 1 1 0 0 1 0 .696 10.75 10.75 0 0 1-19.876 0"/><circle cx="12" cy="12" r="3"/></svg>
<div class="b" style="left:1449px;top:301.0px;width:37.6px;height:37.6px;border:1px solid #e4e7ec;border-radius:7px;box-sizing:border-box;background:#fff"></div>
<svg class="ic" style="left:1459.3px;top:311.2px;width:17px;height:17px" viewBox="0 0 24 24" fill="none" stroke="#f05252" stroke-width="1.85" stroke-linecap="round" stroke-linejoin="round"><path d="M3 6h18"/><path d="M19 6v14c0 1-1 2-2 2H7c-1 0-2-1-2-2V6"/><path d="M8 6V4c0-1 1-2 2-2h4c1 0 2 1 2 2v2"/><line x1="10" x2="10" y1="11" y2="17"/><line x1="14" x2="14" y1="11" y2="17"/></svg>
<div class="b" style="left:1339px;top:399px;width:160px;height:1px;background:#f1f3f5"></div>
<div class="b" style="left:1352px;top:353.9px;width:37.6px;height:37.6px;border:1px solid #e4e7ec;border-radius:7px;box-sizing:border-box;background:#fff"></div>
<svg class="ic" style="left:1362.3px;top:364.09999999999997px;width:17px;height:17px" viewBox="0 0 24 24" fill="none" stroke="#2f5e8a" stroke-width="2" stroke-linecap="round" stroke-linejoin="round"><path d="M12 3H5a2 2 0 0 0-2 2v14a2 2 0 0 0 2 2h14a2 2 0 0 0 2-2v-7"/><path d="M18.375 2.625a1 1 0 0 1 3 3l-9.013 9.014a2 2 0 0 1-.853.505l-2.873.84a.5.5 0 0 1-.62-.62l.84-2.873a2 2 0 0 1 .506-.852z"/></svg>
<div class="b" style="left:1400px;top:353.9px;width:37.6px;height:37.6px;border:1px solid #e4e7ec;border-radius:7px;box-sizing:border-box;background:#fff"></div>
<svg class="ic" style="left:1410.3px;top:364.09999999999997px;width:17px;height:17px" viewBox="0 0 24 24" fill="none" stroke="#2f5e8a" stroke-width="2" stroke-linecap="round" stroke-linejoin="round"><path d="M2.062 12.348a1 1 0 0 1 0-.696 10.75 10.75 0 0 1 19.876 0 1 1 0 0 1 0 .696 10.75 10.75 0 0 1-19.876 0"/><circle cx="12" cy="12" r="3"/></svg>
<div class="b" style="left:1449px;top:353.9px;width:37.6px;height:37.6px;border:1px solid #e4e7ec;border-radius:7px;box-sizing:border-box;background:#fff"></div>
<svg class="ic" style="left:1459.3px;top:364.09999999999997px;width:17px;height:17px" viewBox="0 0 24 24" fill="none" stroke="#f05252" stroke-width="1.85" stroke-linecap="round" stroke-linejoin="round"><path d="M3 6h18"/><path d="M19 6v14c0 1-1 2-2 2H7c-1 0-2-1-2-2V6"/><path d="M8 6V4c0-1 1-2 2-2h4c1 0 2 1 2 2v2"/><line x1="10" x2="10" y1="11" y2="17"/><line x1="14" x2="14" y1="11" y2="17"/></svg>
<div class="b" style="left:1339px;top:452px;width:160px;height:1px;background:#f1f3f5"></div>
<div class="b" style="left:1352px;top:406.6px;width:37.6px;height:37.6px;border:1px solid #e4e7ec;border-radius:7px;box-sizing:border-box;background:#fff"></div>
<svg class="ic" style="left:1362.3px;top:416.8px;width:17px;height:17px" viewBox="0 0 24 24" fill="none" stroke="#2f5e8a" stroke-width="2" stroke-linecap="round" stroke-linejoin="round"><path d="M12 3H5a2 2 0 0 0-2 2v14a2 2 0 0 0 2 2h14a2 2 0 0 0 2-2v-7"/><path d="M18.375 2.625a1 1 0 0 1 3 3l-9.013 9.014a2 2 0 0 1-.853.505l-2.873.84a.5.5 0 0 1-.62-.62l.84-2.873a2 2 0 0 1 .506-.852z"/></svg>
<div class="b" style="left:1400px;top:406.6px;width:37.6px;height:37.6px;border:1px solid #e4e7ec;border-radius:7px;box-sizing:border-box;background:#fff"></div>
<svg class="ic" style="left:1410.3px;top:416.8px;width:17px;height:17px" viewBox="0 0 24 24" fill="none" stroke="#2f5e8a" stroke-width="2" stroke-linecap="round" stroke-linejoin="round"><path d="M2.062 12.348a1 1 0 0 1 0-.696 10.75 10.75 0 0 1 19.876 0 1 1 0 0 1 0 .696 10.75 10.75 0 0 1-19.876 0"/><circle cx="12" cy="12" r="3"/></svg>
<div class="b" style="left:1449px;top:406.6px;width:37.6px;height:37.6px;border:1px solid #e4e7ec;border-radius:7px;box-sizing:border-box;background:#fff"></div>
<svg class="ic" style="left:1459.3px;top:416.8px;width:17px;height:17px" viewBox="0 0 24 24" fill="none" stroke="#f05252" stroke-width="1.85" stroke-linecap="round" stroke-linejoin="round"><path d="M3 6h18"/><path d="M19 6v14c0 1-1 2-2 2H7c-1 0-2-1-2-2V6"/><path d="M8 6V4c0-1 1-2 2-2h4c1 0 2 1 2 2v2"/><line x1="10" x2="10" y1="11" y2="17"/><line x1="14" x2="14" y1="11" y2="17"/></svg>
<div class="b" style="left:1339px;top:505px;width:160px;height:1px;background:#f1f3f5"></div>
<div class="b" style="left:1352px;top:459.4px;width:37.6px;height:37.6px;border:1px solid #e4e7ec;border-radius:7px;box-sizing:border-box;background:#fff"></div>
<svg class="ic" style="left:1362.3px;top:469.59999999999997px;width:17px;height:17px" viewBox="0 0 24 24" fill="none" stroke="#2f5e8a" stroke-width="2" stroke-linecap="round" stroke-linejoin="round"><path d="M12 3H5a2 2 0 0 0-2 2v14a2 2 0 0 0 2 2h14a2 2 0 0 0 2-2v-7"/><path d="M18.375 2.625a1 1 0 0 1 3 3l-9.013 9.014a2 2 0 0 1-.853.505l-2.873.84a.5.5 0 0 1-.62-.62l.84-2.873a2 2 0 0 1 .506-.852z"/></svg>
<div class="b" style="left:1400px;top:459.4px;width:37.6px;height:37.6px;border:1px solid #e4e7ec;border-radius:7px;box-sizing:border-box;background:#fff"></div>
<svg class="ic" style="left:1410.3px;top:469.59999999999997px;width:17px;height:17px" viewBox="0 0 24 24" fill="none" stroke="#2f5e8a" stroke-width="2" stroke-linecap="round" stroke-linejoin="round"><path d="M2.062 12.348a1 1 0 0 1 0-.696 10.75 10.75 0 0 1 19.876 0 1 1 0 0 1 0 .696 10.75 10.75 0 0 1-19.876 0"/><circle cx="12" cy="12" r="3"/></svg>
<div class="b" style="left:1449px;top:459.4px;width:37.6px;height:37.6px;border:1px solid #e4e7ec;border-radius:7px;box-sizing:border-box;background:#fff"></div>
<svg class="ic" style="left:1459.3px;top:469.59999999999997px;width:17px;height:17px" viewBox="0 0 24 24" fill="none" stroke="#f05252" stroke-width="1.85" stroke-linecap="round" stroke-linejoin="round"><path d="M3 6h18"/><path d="M19 6v14c0 1-1 2-2 2H7c-1 0-2-1-2-2V6"/><path d="M8 6V4c0-1 1-2 2-2h4c1 0 2 1 2 2v2"/><line x1="10" x2="10" y1="11" y2="17"/><line x1="14" x2="14" y1="11" y2="17"/></svg>
<div class="b" style="left:1339px;top:557px;width:160px;height:1px;background:#f1f3f5"></div>
<div class="b" style="left:1352px;top:512.0px;width:37.6px;height:37.6px;border:1px solid #e4e7ec;border-radius:7px;box-sizing:border-box;background:#fff"></div>
<svg class="ic" style="left:1362.3px;top:522.2px;width:17px;height:17px" viewBox="0 0 24 24" fill="none" stroke="#2f5e8a" stroke-width="2" stroke-linecap="round" stroke-linejoin="round"><path d="M12 3H5a2 2 0 0 0-2 2v14a2 2 0 0 0 2 2h14a2 2 0 0 0 2-2v-7"/><path d="M18.375 2.625a1 1 0 0 1 3 3l-9.013 9.014a2 2 0 0 1-.853.505l-2.873.84a.5.5 0 0 1-.62-.62l.84-2.873a2 2 0 0 1 .506-.852z"/></svg>
<div class="b" style="left:1400px;top:512.0px;width:37.6px;height:37.6px;border:1px solid #e4e7ec;border-radius:7px;box-sizing:border-box;background:#fff"></div>
<svg class="ic" style="left:1410.3px;top:522.2px;width:17px;height:17px" viewBox="0 0 24 24" fill="none" stroke="#2f5e8a" stroke-width="2" stroke-linecap="round" stroke-linejoin="round"><path d="M2.062 12.348a1 1 0 0 1 0-.696 10.75 10.75 0 0 1 19.876 0 1 1 0 0 1 0 .696 10.75 10.75 0 0 1-19.876 0"/><circle cx="12" cy="12" r="3"/></svg>
<div class="b" style="left:1449px;top:512.0px;width:37.6px;height:37.6px;border:1px solid #e4e7ec;border-radius:7px;box-sizing:border-box;background:#fff"></div>
<svg class="ic" style="left:1459.3px;top:522.2px;width:17px;height:17px" viewBox="0 0 24 24" fill="none" stroke="#f05252" stroke-width="1.85" stroke-linecap="round" stroke-linejoin="round"><path d="M3 6h18"/><path d="M19 6v14c0 1-1 2-2 2H7c-1 0-2-1-2-2V6"/><path d="M8 6V4c0-1 1-2 2-2h4c1 0 2 1 2 2v2"/><line x1="10" x2="10" y1="11" y2="17"/><line x1="14" x2="14" y1="11" y2="17"/></svg>
<div class="b" style="left:1339px;top:610px;width:160px;height:1px;background:#f1f3f5"></div>
<div class="b" style="left:1352px;top:564.6px;width:37.6px;height:37.6px;border:1px solid #e4e7ec;border-radius:7px;box-sizing:border-box;background:#fff"></div>
<svg class="ic" style="left:1362.3px;top:574.8000000000001px;width:17px;height:17px" viewBox="0 0 24 24" fill="none" stroke="#2f5e8a" stroke-width="2" stroke-linecap="round" stroke-linejoin="round"><path d="M12 3H5a2 2 0 0 0-2 2v14a2 2 0 0 0 2 2h14a2 2 0 0 0 2-2v-7"/><path d="M18.375 2.625a1 1 0 0 1 3 3l-9.013 9.014a2 2 0 0 1-.853.505l-2.873.84a.5.5 0 0 1-.62-.62l.84-2.873a2 2 0 0 1 .506-.852z"/></svg>
<div class="b" style="left:1400px;top:564.6px;width:37.6px;height:37.6px;border:1px solid #e4e7ec;border-radius:7px;box-sizing:border-box;background:#fff"></div>
<svg class="ic" style="left:1410.3px;top:574.8000000000001px;width:17px;height:17px" viewBox="0 0 24 24" fill="none" stroke="#2f5e8a" stroke-width="2" stroke-linecap="round" stroke-linejoin="round"><path d="M2.062 12.348a1 1 0 0 1 0-.696 10.75 10.75 0 0 1 19.876 0 1 1 0 0 1 0 .696 10.75 10.75 0 0 1-19.876 0"/><circle cx="12" cy="12" r="3"/></svg>
<div class="b" style="left:1449px;top:564.6px;width:37.6px;height:37.6px;border:1px solid #e4e7ec;border-radius:7px;box-sizing:border-box;background:#fff"></div>
<svg class="ic" style="left:1459.3px;top:574.8000000000001px;width:17px;height:17px" viewBox="0 0 24 24" fill="none" stroke="#f05252" stroke-width="1.85" stroke-linecap="round" stroke-linejoin="round"><path d="M3 6h18"/><path d="M19 6v14c0 1-1 2-2 2H7c-1 0-2-1-2-2V6"/><path d="M8 6V4c0-1 1-2 2-2h4c1 0 2 1 2 2v2"/><line x1="10" x2="10" y1="11" y2="17"/><line x1="14" x2="14" y1="11" y2="17"/></svg>
<div class="b" style="left:1339px;top:662px;width:160px;height:1px;background:#f1f3f5"></div>
<div class="b" style="left:1352px;top:617.2px;width:37.6px;height:37.6px;border:1px solid #e4e7ec;border-radius:7px;box-sizing:border-box;background:#fff"></div>
<svg class="ic" style="left:1362.3px;top:627.4000000000001px;width:17px;height:17px" viewBox="0 0 24 24" fill="none" stroke="#2f5e8a" stroke-width="2" stroke-linecap="round" stroke-linejoin="round"><path d="M12 3H5a2 2 0 0 0-2 2v14a2 2 0 0 0 2 2h14a2 2 0 0 0 2-2v-7"/><path d="M18.375 2.625a1 1 0 0 1 3 3l-9.013 9.014a2 2 0 0 1-.853.505l-2.873.84a.5.5 0 0 1-.62-.62l.84-2.873a2 2 0 0 1 .506-.852z"/></svg>
<div class="b" style="left:1400px;top:617.2px;width:37.6px;height:37.6px;border:1px solid #e4e7ec;border-radius:7px;box-sizing:border-box;background:#fff"></div>
<svg class="ic" style="left:1410.3px;top:627.4000000000001px;width:17px;height:17px" viewBox="0 0 24 24" fill="none" stroke="#2f5e8a" stroke-width="2" stroke-linecap="round" stroke-linejoin="round"><path d="M2.062 12.348a1 1 0 0 1 0-.696 10.75 10.75 0 0 1 19.876 0 1 1 0 0 1 0 .696 10.75 10.75 0 0 1-19.876 0"/><circle cx="12" cy="12" r="3"/></svg>
<div class="b" style="left:1449px;top:617.2px;width:37.6px;height:37.6px;border:1px solid #e4e7ec;border-radius:7px;box-sizing:border-box;background:#fff"></div>
<svg class="ic" style="left:1459.3px;top:627.4000000000001px;width:17px;height:17px" viewBox="0 0 24 24" fill="none" stroke="#f05252" stroke-width="1.85" stroke-linecap="round" stroke-linejoin="round"><path d="M3 6h18"/><path d="M19 6v14c0 1-1 2-2 2H7c-1 0-2-1-2-2V6"/><path d="M8 6V4c0-1 1-2 2-2h4c1 0 2 1 2 2v2"/><line x1="10" x2="10" y1="11" y2="17"/><line x1="14" x2="14" y1="11" y2="17"/></svg>
<div class="b" style="left:1339px;top:715px;width:160px;height:1px;background:#f1f3f5"></div>
<div class="b" style="left:1352px;top:669.9px;width:37.6px;height:37.6px;border:1px solid #e4e7ec;border-radius:7px;box-sizing:border-box;background:#fff"></div>
<svg class="ic" style="left:1362.3px;top:680.1px;width:17px;height:17px" viewBox="0 0 24 24" fill="none" stroke="#2f5e8a" stroke-width="2" stroke-linecap="round" stroke-linejoin="round"><path d="M12 3H5a2 2 0 0 0-2 2v14a2 2 0 0 0 2 2h14a2 2 0 0 0 2-2v-7"/><path d="M18.375 2.625a1 1 0 0 1 3 3l-9.013 9.014a2 2 0 0 1-.853.505l-2.873.84a.5.5 0 0 1-.62-.62l.84-2.873a2 2 0 0 1 .506-.852z"/></svg>
<div class="b" style="left:1400px;top:669.9px;width:37.6px;height:37.6px;border:1px solid #e4e7ec;border-radius:7px;box-sizing:border-box;background:#fff"></div>
<svg class="ic" style="left:1410.3px;top:680.1px;width:17px;height:17px" viewBox="0 0 24 24" fill="none" stroke="#2f5e8a" stroke-width="2" stroke-linecap="round" stroke-linejoin="round"><path d="M2.062 12.348a1 1 0 0 1 0-.696 10.75 10.75 0 0 1 19.876 0 1 1 0 0 1 0 .696 10.75 10.75 0 0 1-19.876 0"/><circle cx="12" cy="12" r="3"/></svg>
<div class="b" style="left:1449px;top:669.9px;width:37.6px;height:37.6px;border:1px solid #e4e7ec;border-radius:7px;box-sizing:border-box;background:#fff"></div>
<svg class="ic" style="left:1459.3px;top:680.1px;width:17px;height:17px" viewBox="0 0 24 24" fill="none" stroke="#f05252" stroke-width="1.85" stroke-linecap="round" stroke-linejoin="round"><path d="M3 6h18"/><path d="M19 6v14c0 1-1 2-2 2H7c-1 0-2-1-2-2V6"/><path d="M8 6V4c0-1 1-2 2-2h4c1 0 2 1 2 2v2"/><line x1="10" x2="10" y1="11" y2="17"/><line x1="14" x2="14" y1="11" y2="17"/></svg>
<div class="b" style="left:1339px;top:768px;width:160px;height:1px;background:#f1f3f5"></div>
<div class="b" style="left:1352px;top:722.7px;width:37.6px;height:37.6px;border:1px solid #e4e7ec;border-radius:7px;box-sizing:border-box;background:#fff"></div>
<svg class="ic" style="left:1362.3px;top:732.9000000000001px;width:17px;height:17px" viewBox="0 0 24 24" fill="none" stroke="#2f5e8a" stroke-width="2" stroke-linecap="round" stroke-linejoin="round"><path d="M12 3H5a2 2 0 0 0-2 2v14a2 2 0 0 0 2 2h14a2 2 0 0 0 2-2v-7"/><path d="M18.375 2.625a1 1 0 0 1 3 3l-9.013 9.014a2 2 0 0 1-.853.505l-2.873.84a.5.5 0 0 1-.62-.62l.84-2.873a2 2 0 0 1 .506-.852z"/></svg>
<div class="b" style="left:1400px;top:722.7px;width:37.6px;height:37.6px;border:1px solid #e4e7ec;border-radius:7px;box-sizing:border-box;background:#fff"></div>
<svg class="ic" style="left:1410.3px;top:732.9000000000001px;width:17px;height:17px" viewBox="0 0 24 24" fill="none" stroke="#2f5e8a" stroke-width="2" stroke-linecap="round" stroke-linejoin="round"><path d="M2.062 12.348a1 1 0 0 1 0-.696 10.75 10.75 0 0 1 19.876 0 1 1 0 0 1 0 .696 10.75 10.75 0 0 1-19.876 0"/><circle cx="12" cy="12" r="3"/></svg>
<div class="b" style="left:1449px;top:722.7px;width:37.6px;height:37.6px;border:1px solid #e4e7ec;border-radius:7px;box-sizing:border-box;background:#fff"></div>
<svg class="ic" style="left:1459.3px;top:732.9000000000001px;width:17px;height:17px" viewBox="0 0 24 24" fill="none" stroke="#f05252" stroke-width="1.85" stroke-linecap="round" stroke-linejoin="round"><path d="M3 6h18"/><path d="M19 6v14c0 1-1 2-2 2H7c-1 0-2-1-2-2V6"/><path d="M8 6V4c0-1 1-2 2-2h4c1 0 2 1 2 2v2"/><line x1="10" x2="10" y1="11" y2="17"/><line x1="14" x2="14" y1="11" y2="17"/></svg>
<div class="b" style="left:1352px;top:776.0px;width:37.6px;height:37.6px;border:1px solid #e4e7ec;border-radius:7px;box-sizing:border-box;background:#fff"></div>
<svg class="ic" style="left:1362.3px;top:786.2px;width:17px;height:17px" viewBox="0 0 24 24" fill="none" stroke="#2f5e8a" stroke-width="2" stroke-linecap="round" stroke-linejoin="round"><path d="M12 3H5a2 2 0 0 0-2 2v14a2 2 0 0 0 2 2h14a2 2 0 0 0 2-2v-7"/><path d="M18.375 2.625a1 1 0 0 1 3 3l-9.013 9.014a2 2 0 0 1-.853.505l-2.873.84a.5.5 0 0 1-.62-.62l.84-2.873a2 2 0 0 1 .506-.852z"/></svg>
<div class="b" style="left:1400px;top:776.0px;width:37.6px;height:37.6px;border:1px solid #e4e7ec;border-radius:7px;box-sizing:border-box;background:#fff"></div>
<svg class="ic" style="left:1410.3px;top:786.2px;width:17px;height:17px" viewBox="0 0 24 24" fill="none" stroke="#2f5e8a" stroke-width="2" stroke-linecap="round" stroke-linejoin="round"><path d="M2.062 12.348a1 1 0 0 1 0-.696 10.75 10.75 0 0 1 19.876 0 1 1 0 0 1 0 .696 10.75 10.75 0 0 1-19.876 0"/><circle cx="12" cy="12" r="3"/></svg>
<div class="b" style="left:1449px;top:776.0px;width:37.6px;height:37.6px;border:1px solid #e4e7ec;border-radius:7px;box-sizing:border-box;background:#fff"></div>
<svg class="ic" style="left:1459.3px;top:786.2px;width:17px;height:17px" viewBox="0 0 24 24" fill="none" stroke="#f05252" stroke-width="1.85" stroke-linecap="round" stroke-linejoin="round"><path d="M3 6h18"/><path d="M19 6v14c0 1-1 2-2 2H7c-1 0-2-1-2-2V6"/><path d="M8 6V4c0-1 1-2 2-2h4c1 0 2 1 2 2v2"/><line x1="10" x2="10" y1="11" y2="17"/><line x1="14" x2="14" y1="11" y2="17"/></svg>
<div class="b" style="left:283px;top:822px;width:1216px;height:1px;background:#e5e7eb"></div>
<div class="t" style="left:299.5px;top:846.80px;font-size:15px;line-height:20px;color:#111;font-weight:normal;-webkit-text-stroke:0.3px currentColor;white-space:nowrap">Baris per halaman</div>
<div class="b" style="left:433px;top:839px;width:76px;height:36px;border:1px solid #e5e7eb;border-radius:7px;box-sizing:border-box;background:#fff"></div>
<div class="t" style="left:445.5px;top:846.80px;font-size:15px;line-height:20px;color:#111;font-weight:normal;-webkit-text-stroke:0.3px currentColor;">10</div>
<svg class="ic" style="left:480.5px;top:850px;width:14px;height:14px" viewBox="0 0 24 24" fill="none" stroke="#8a97ab" stroke-width="1.9" stroke-linecap="round" stroke-linejoin="round"><path d="m6 9 6 6 6-6"/></svg>
<div class="t" style="left:898.5px;top:846.80px;font-size:14.8px;line-height:20px;color:#111;font-weight:normal;-webkit-text-stroke:0.3px currentColor;transform:translateX(-50%);white-space:nowrap">Halaman 1 dari 10</div>
<div class="b" style="left:1288px;top:840px;width:42px;height:34px;border:1px solid #e5e7eb;border-radius:7px;box-sizing:border-box;background:#fff"></div>
<svg class="ic" style="left:1301px;top:849px;width:16px;height:16px" viewBox="0 0 24 24" fill="none" stroke="#8e99aa" stroke-width="2" stroke-linecap="round" stroke-linejoin="round"><path d="m11 17-5-5 5-5"/><path d="m18 17-5-5 5-5"/></svg>
<div class="b" style="left:1339px;top:840px;width:42px;height:34px;border:1px solid #e5e7eb;border-radius:7px;box-sizing:border-box;background:#fff"></div>
<svg class="ic" style="left:1352px;top:849px;width:16px;height:16px" viewBox="0 0 24 24" fill="none" stroke="#8e99aa" stroke-width="2" stroke-linecap="round" stroke-linejoin="round"><path d="m15 18-6-6 6-6"/></svg>
<div class="b" style="left:1390px;top:840px;width:42px;height:34px;border:1px solid #e5e7eb;border-radius:7px;box-sizing:border-box;background:#fff"></div>
<svg class="ic" style="left:1403px;top:849px;width:16px;height:16px" viewBox="0 0 24 24" fill="none" stroke="#1e4a6e" stroke-width="2" stroke-linecap="round" stroke-linejoin="round"><path d="m9 18 6-6-6-6"/></svg>
<div class="b" style="left:1440px;top:840px;width:42px;height:34px;border:1px solid #e5e7eb;border-radius:7px;box-sizing:border-box;background:#fff"></div>
<svg class="ic" style="left:1453px;top:849px;width:16px;height:16px" viewBox="0 0 24 24" fill="none" stroke="#1e4a6e" stroke-width="2" stroke-linecap="round" stroke-linejoin="round"><path d="m6 17 5-5-5-5"/><path d="m13 17 5-5-5-5"/></svg>
</body></html>
